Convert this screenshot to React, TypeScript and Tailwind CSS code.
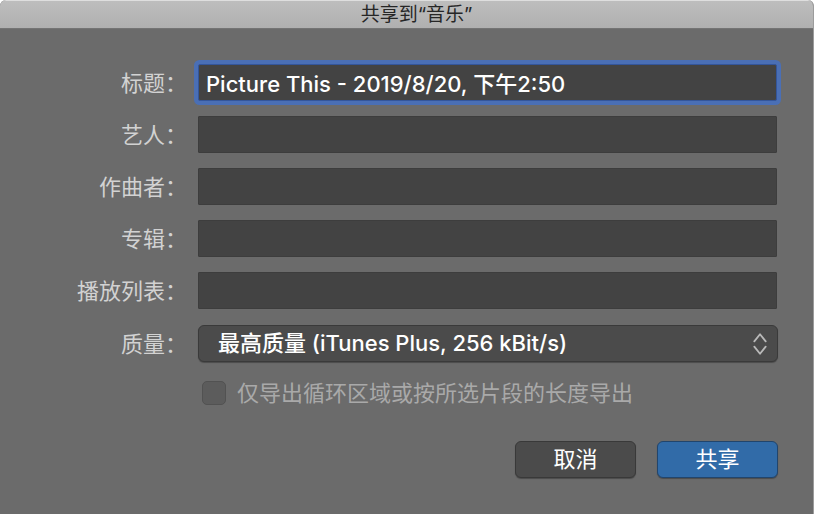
import React, { useState } from 'react';

const FIELDS = [
  { id: 'title', label: '标题：' },
  { id: 'artist', label: '艺人：' },
  { id: 'composer', label: '作曲者：' },
  { id: 'album', label: '专辑：' },
  { id: 'playlist', label: '播放列表：' },
];

const LABEL = 'w-[187px] shrink-0 text-right text-[#d2d2d2]';

const BUTTON =
  'h-[37px] w-[121px] rounded-md border text-center leading-[35px] text-white shadow-[0_1px_1px_rgba(0,0,0,0.3)]';

function UpDownIcon() {
  return (
    <svg
      className="pointer-events-none absolute top-1/2 right-[10px] h-[22px] w-4 -translate-y-1/2"
      viewBox="0 0 16 22"
      fill="none"
      stroke="#b9b9b9"
      strokeWidth="1.8"
      strokeLinecap="round"
      strokeLinejoin="round"
    >
      <path d="M2.3 8.4 8 1.2l5.7 7.2" />
      <path d="M2.3 13.6 8 20.8l5.7-7.2" />
    </svg>
  );
}

export default function App() {
  const [values, setValues] = useState<Record<string, string>>({
    title: 'Picture This - 2019/8/20, 下午2:50',
  });
  const [quality, setQuality] = useState('highest');

  return (
    <div className="h-screen bg-white pb-[2px] font-['Inter','Noto_Sans_CJK_SC',sans-serif] text-[22px] leading-[30px]">
      <div
        role="dialog"
        aria-labelledby="dialog-title"
        className="flex h-full flex-col overflow-hidden rounded-t-md border-r border-[#9c9c9c] bg-[#6b6b6b]"
      >
        {/* Title bar */}
        <header className="h-[29px] shrink-0 border-t border-b border-t-[#dedede] border-b-[#747474] bg-linear-to-b from-[#bdbdbd] to-[#b0b0b0]">
          <h1 id="dialog-title" className="pl-5 text-center text-[19px] leading-[28px] text-[#262626]">
            共享到“音乐”
          </h1>
        </header>

        <form className="pt-[35px] pr-[35px]" onSubmit={(e) => e.preventDefault()}>
          {/* Song details */}
          <div className="flex flex-col gap-[15px] pr-px">
            {FIELDS.map((field) => (
              <div key={field.id} className="flex items-center">
                <label htmlFor={field.id} className={LABEL}>
                  {field.label}
                </label>
                <input
                  id={field.id}
                  type="text"
                  autoFocus={field.id === 'title'}
                  value={values[field.id] ?? ''}
                  onChange={(e) => setValues({ ...values, [field.id]: e.target.value })}
                  className="ml-[11px] h-[37px] min-w-0 flex-1 rounded-[1px] border border-[#3d3d3d] bg-[#434343] px-[7px] pb-[2px] font-medium text-white caret-transparent outline-none focus:rounded-[2px] focus:border-[#34569b] focus:ring-4 focus:ring-[#4a6fb5]"
                />
              </div>
            ))}
          </div>

          {/* Quality */}
          <div className="mt-4 flex items-center">
            <label htmlFor="quality" className={LABEL}>
              质量：
            </label>
            <div className="relative ml-[11px] flex-1">
              <select
                id="quality"
                value={quality}
                onChange={(e) => setQuality(e.target.value)}
                className="block h-[37px] w-full appearance-none rounded-md border border-[#3a3a3a] bg-[#4b4b4b] pr-10 pb-[2px] pl-[19px] font-medium text-white shadow-[0_1px_1px_rgba(0,0,0,0.3)] outline-none"
              >
                <option value="highest">最高质量 (iTunes Plus, 256 kBit/s)</option>
              </select>
              <UpDownIcon />
            </div>
          </div>

          <div className="mt-4 ml-[202px] flex items-center gap-[11px]">
            <input
              id="cycle-only"
              type="checkbox"
              disabled
              className="size-[24px] shrink-0 appearance-none rounded-[5px] border border-[#525252] bg-[#5c5c5c]"
            />
            <label htmlFor="cycle-only" className="text-[#a9a9a9]">
              仅导出循环区域或按所选片段的长度导出
            </label>
          </div>

          {/* Actions */}
          <div className="mt-[33px] flex justify-end gap-[21px]">
            <button type="button" className={`${BUTTON} border-[#393939] bg-[#4b4b4b]`}>
              取消
            </button>
            <button type="submit" className={`${BUTTON} border-[#21456d] bg-[#316ba8]`}>
              共享
            </button>
          </div>
        </form>
      </div>
    </div>
  );
}
